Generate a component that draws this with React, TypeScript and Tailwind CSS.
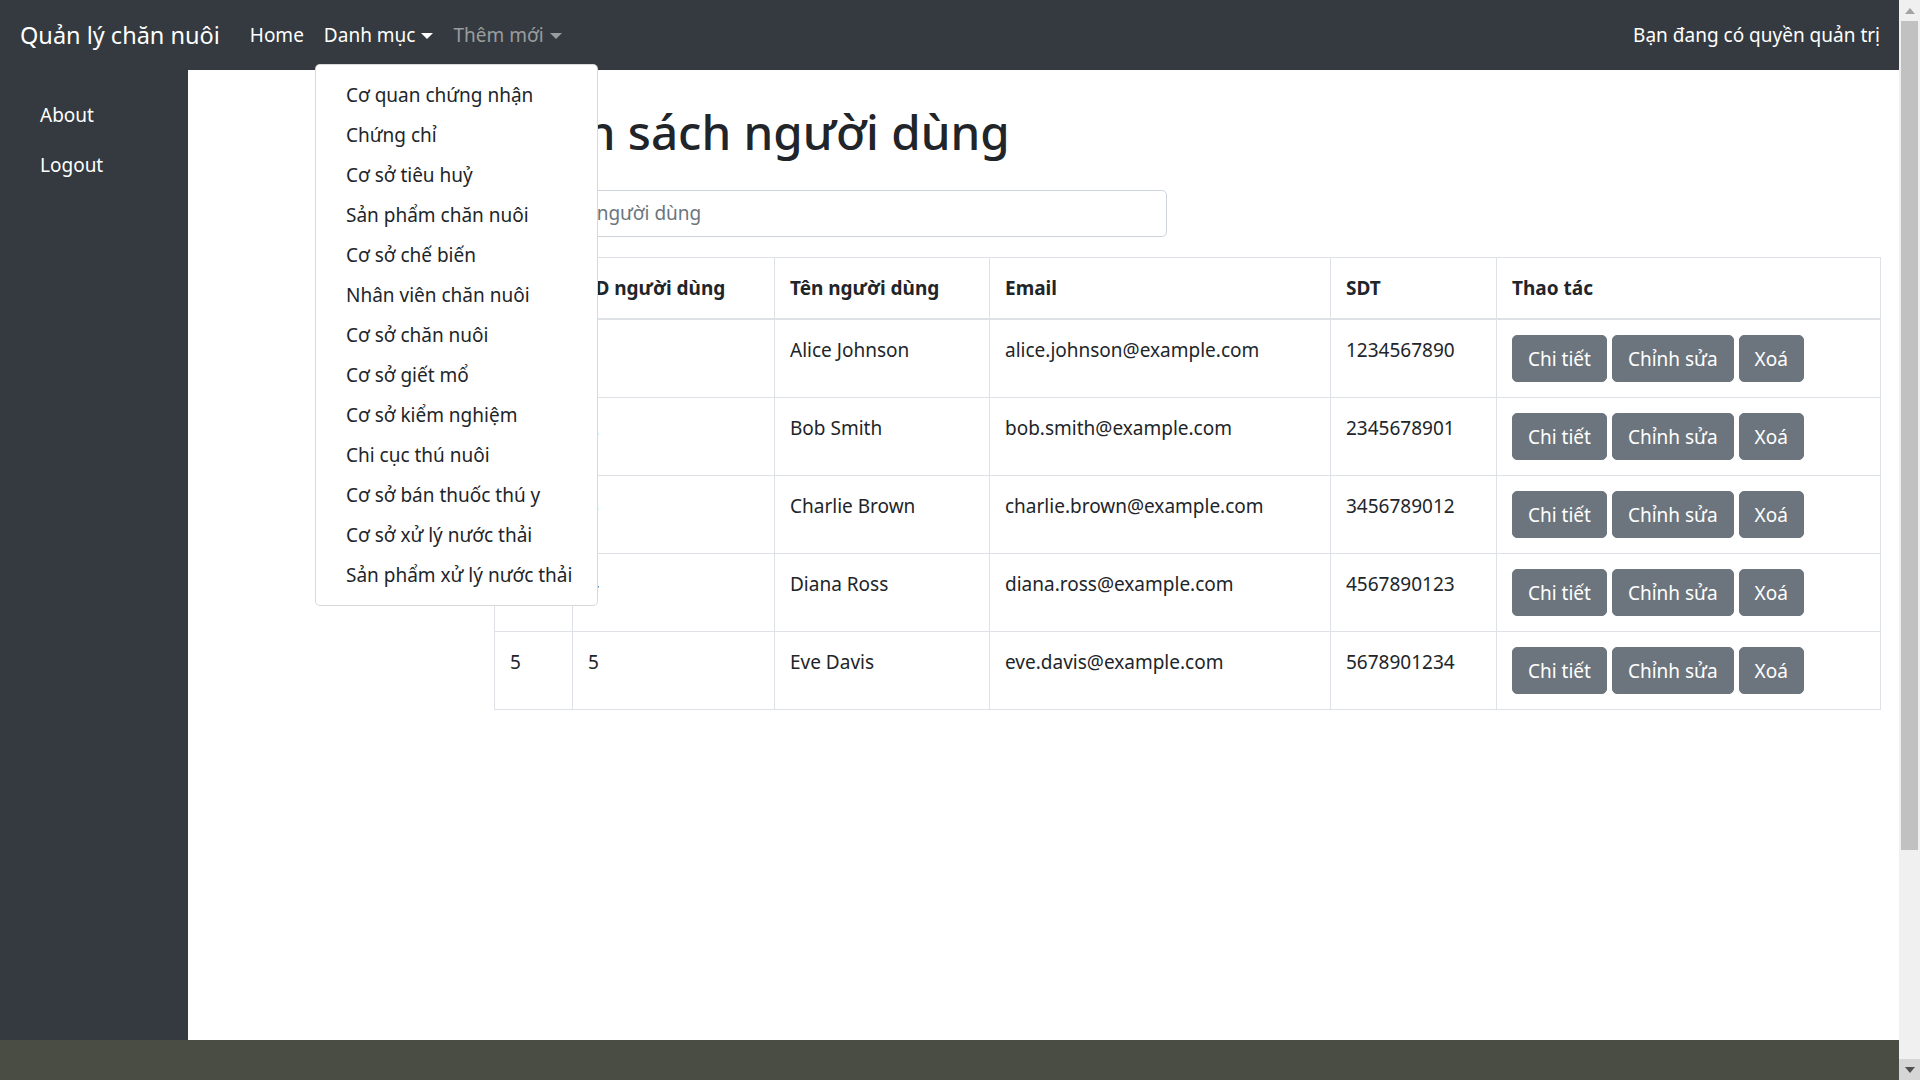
import { useState } from 'react';

const menuItems = [
  'Cơ quan chứng nhận',
  'Chứng chỉ',
  'Cơ sở tiêu huỷ',
  'Sản phẩm chăn nuôi',
  'Cơ sở chế biến',
  'Nhân viên chăn nuôi',
  'Cơ sở chăn nuôi',
  'Cơ sở giết mổ',
  'Cơ sở kiểm nghiệm',
  'Chi cục thú nuôi',
  'Cơ sở bán thuốc thú y',
  'Cơ sở xử lý nước thải',
  'Sản phẩm xử lý nước thải',
];

const users = [
  { id: 1, name: 'Alice Johnson', email: 'alice.johnson@example.com', phone: '1234567890' },
  { id: 2, name: 'Bob Smith', email: 'bob.smith@example.com', phone: '2345678901' },
  { id: 3, name: 'Charlie Brown', email: 'charlie.brown@example.com', phone: '3456789012' },
  { id: 4, name: 'Diana Ross', email: 'diana.ross@example.com', phone: '4567890123' },
  { id: 5, name: 'Eve Davis', email: 'eve.davis@example.com', phone: '5678901234' },
];

const Caret = () => (
  <span className="inline-block w-0 h-0 ml-[6px] align-[3px] border-x-[6px] border-x-transparent border-t-[6px] border-t-current" />
);

const ActionButton = ({ label }: { label: string }) => (
  <button className="bg-[#6c757d] text-white text-[19px] leading-[30px] px-[15px] py-[7.5px] border border-[#6c757d] rounded-[5px]">
    {label}
  </button>
);

const App = () => {
  const [menuOpen] = useState(true);

  return (
    <div
      className="flex w-full h-[1080px] overflow-hidden bg-white text-[#212529]"
      style={{ fontFamily: '"Noto Sans", "Open Sans", sans-serif' }}
    >
      <div className="flex-1 min-w-0 flex flex-col">
        <nav className="relative h-[70px] shrink-0 bg-[#343a40] flex items-center pl-[20px] pr-[19px]">
          <span className="text-white text-[23.5px] leading-[36px] mr-[20px]">Quản lý chăn nuôi</span>
          <div className="flex items-center text-[19px] leading-[30px]">
            <a className="px-[10px] text-white">Home</a>
            <a className="px-[10px] text-white">
              Danh mục
              <Caret />
            </a>
            <a className="px-[10px] text-white/50">
              Thêm mới
              <Caret />
            </a>
          </div>
          <span className="ml-auto text-white text-[19px] leading-[30px]">Bạn đang có quyền quản trị</span>

          {menuOpen && (
            <div className="absolute left-[315px] top-[64px] z-20 w-[283px] bg-white border border-black/15 rounded-[5px] py-[10px]">
              {menuItems.map((item) => (
                <a key={item} className="block px-[30px] py-[5px] text-[19px] leading-[30px] text-[#212529] whitespace-nowrap">
                  {item}
                </a>
              ))}
            </div>
          )}
        </nav>

        <div className="flex h-[970px] shrink-0">
          <aside className="w-[188px] shrink-0 bg-[#343a40] pt-[20px]">
            <a className="flex items-center h-[50px] px-[40px] text-white text-[19px]">About</a>
            <a className="flex items-center h-[50px] px-[40px] text-white text-[19px]">Logout</a>
          </aside>

          <main className="flex-1 min-w-0 pl-[306px] pr-[19px]">
            <h1 className="mt-[32px] mb-[10px] text-[47.5px] leading-[60px] font-medium">Danh sách người dùng</h1>
            <div className="mt-[28px] w-[673px] h-[47px] border border-[#ced4da] rounded-[5px] flex items-center px-[15px] text-[19px] text-[#6c757d]">
              Tìm kiếm người dùng
            </div>

            <table className="mt-[20px] w-[1386px] table-fixed border-collapse text-[19px] leading-[30px]">
              <colgroup>
                <col className="w-[78px]" />
                <col className="w-[202px]" />
                <col className="w-[215px]" />
                <col className="w-[341px]" />
                <col className="w-[166px]" />
                <col className="w-[384px]" />
              </colgroup>
              <thead>
                <tr>
                  {['#', 'ID người dùng', 'Tên người dùng', 'Email', 'SDT', 'Thao tác'].map((h) => (
                    <th key={h} className="text-left font-bold p-[15px] border border-[#dee2e6] border-b-2 align-bottom">
                      {h}
                    </th>
                  ))}
                </tr>
              </thead>
              <tbody>
                {users.map((u) => (
                  <tr key={u.id}>
                    <td className="p-[15px] border border-[#dee2e6] align-top">{u.id}</td>
                    <td className="p-[15px] border border-[#dee2e6] align-top">{u.id}</td>
                    <td className="p-[15px] border border-[#dee2e6] align-top">{u.name}</td>
                    <td className="p-[15px] border border-[#dee2e6] align-top">{u.email}</td>
                    <td className="p-[15px] border border-[#dee2e6] align-top">{u.phone}</td>
                    <td className="p-[15px] border border-[#dee2e6] align-top">
                      <div className="flex gap-[5px]">
                        <ActionButton label="Chi tiết" />
                        <ActionButton label="Chỉnh sửa" />
                        <ActionButton label="Xoá" />
                      </div>
                    </td>
                  </tr>
                ))}
              </tbody>
            </table>
          </main>
        </div>

        <footer className="flex-1 bg-[#4a4d43]" />
      </div>

      {/* fake browser scrollbar */}
      <div className="w-[21px] shrink-0 bg-[#f0f0f0] flex flex-col">
        <div className="h-[21px] flex items-center justify-center">
          <svg width="10" height="6" viewBox="0 0 10 6">
            <path d="M5 0 L10 6 L0 6 Z" fill="#a3a3a3" />
          </svg>
        </div>
        <div className="mx-[2px] h-[829px] bg-[#c1c1c1]" />
        <div className="flex-1" />
        <div className="h-[21px] bg-[#d6d6d6] flex items-center justify-center">
          <svg width="10" height="6" viewBox="0 0 10 6">
            <path d="M0 0 L10 0 L5 6 Z" fill="#505050" />
          </svg>
        </div>
      </div>
    </div>
  );
};

export default App;
